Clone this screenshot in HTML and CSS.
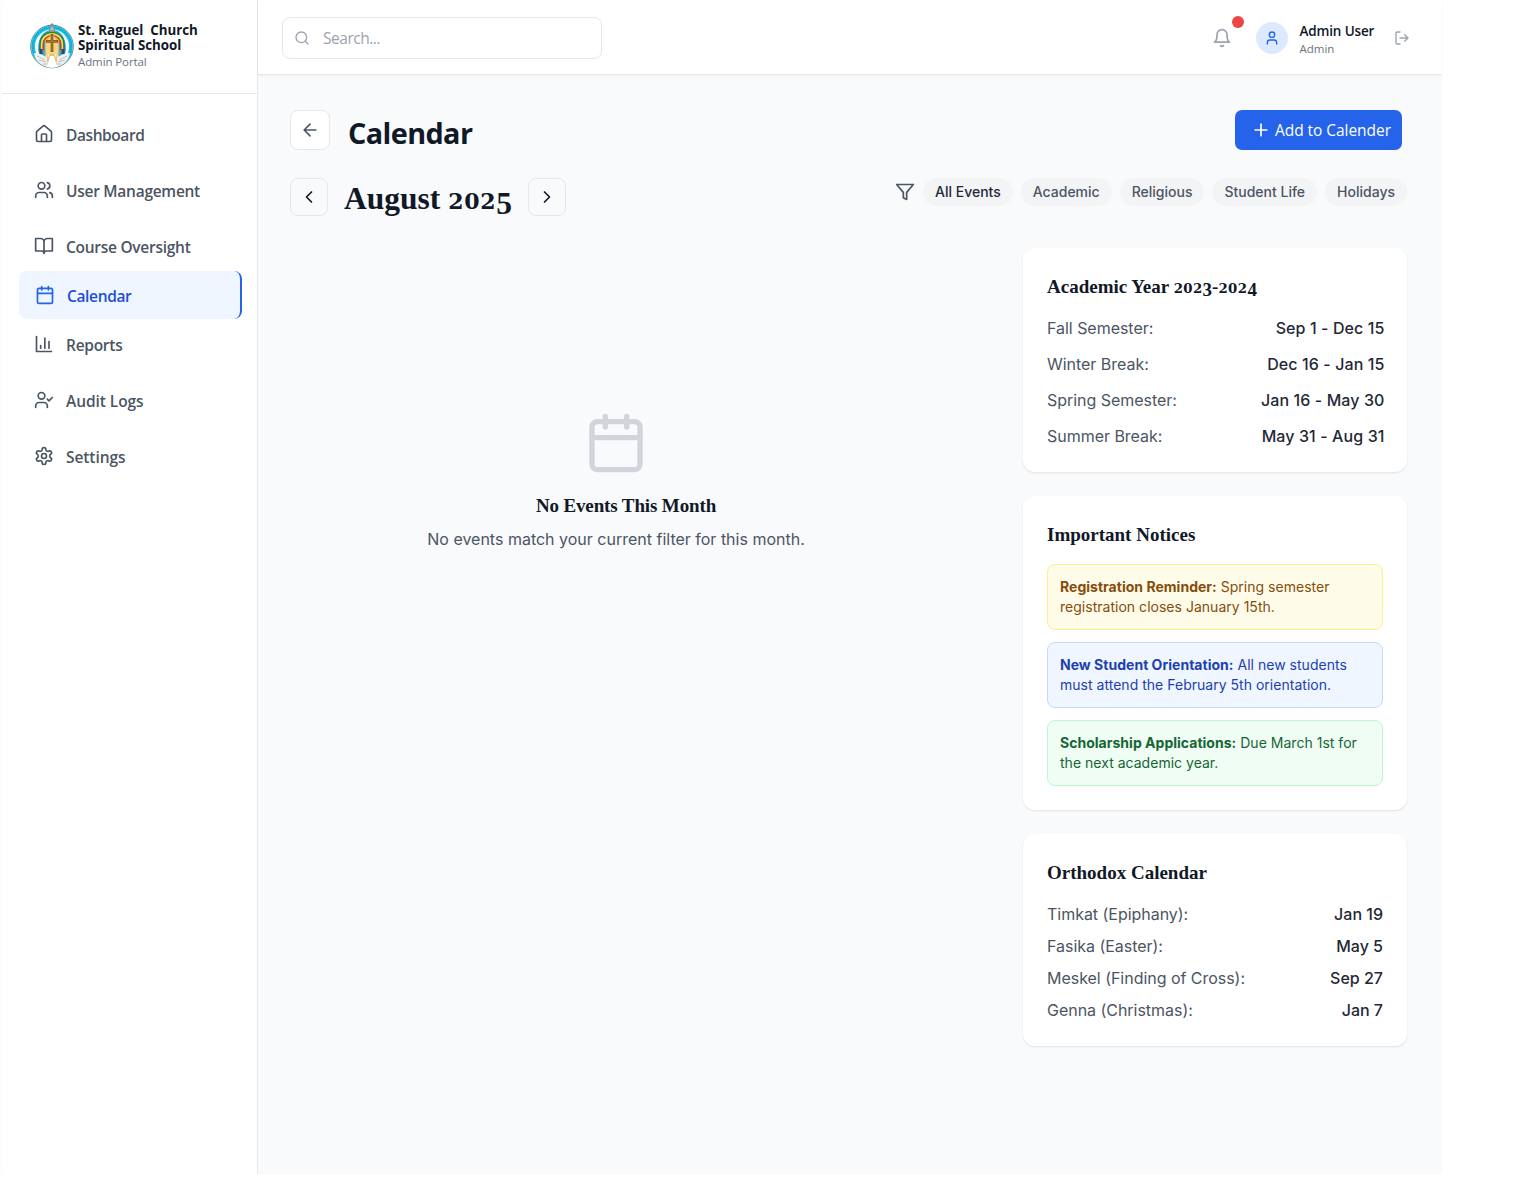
FILE: index.html
```html
<!DOCTYPE html>
<html lang="en">
<head>
<meta charset="utf-8">
<title>Calendar - Admin Portal</title>
<link rel="stylesheet" href="styles.css">
</head>
<body>
<div class="app">
  <aside class="sidebar">
    <div class="brand">
      <svg class="logo" viewBox="0 0 44 46">
        <circle cx="22" cy="23.500" r="21.300" fill="#fff" stroke="#3d5a66" stroke-width=".8"/>
        <circle cx="22" cy="23.500" r="19" fill="#fff" stroke="#18c3ea" stroke-width="3.800"/>
        <circle cx="22" cy="23.500" r="19.200" fill="none" stroke="#14566b" stroke-width="1.400" stroke-dasharray="1 1.400" opacity=".5"/>
        <path d="M8 27C8 13 14 7 22 7s14 6 14 20l-2 8H10z" fill="#35a9e8"/>
        <path d="M15 36V15l7-8 7 8v21z" fill="#e6b64c"/>
        <path d="M10 27V22C10 14 15 9.500 22 9.500S34 14 34 22v5" fill="none" stroke="#22863c" stroke-width="1.600"/>
        <path d="M11.700 27V22C11.700 15 16 11.200 22 11.200S32.300 15 32.300 22v5" fill="none" stroke="#f5df38" stroke-width="1.700"/>
        <path d="M13.300 27V22C13.300 16 17 12.800 22 12.800S30.700 16 30.700 22v5" fill="none" stroke="#d93732" stroke-width="1.400"/>
        <path d="M16 34V19l6-9 6 9v15z" fill="#f4d883"/>
        <path d="M22 11v18M16 18.300h12" stroke="#865018" stroke-width="2.700"/>
        <path d="M22 12v16M17 18.300h10" stroke="#b98035" stroke-width="1"/>
        <path d="M9.500 26h3v5h-3zM31.500 26h3v5h-3z" fill="#3a4656"/>
        <path d="M4 30c5 0 9 2 12 4l2-3 4 3 4-3 2 3c3-2 7-4 12-4-1 8-8 14-18 15C12 44 5 38 4 30z" fill="#f4f2ee"/>
        <path d="M7 33l8 4M9 37l7 2M13 41l5 0M37 33l-8 4M35 37l-7 2M31 41l-5 0" stroke="#a8aeb5" stroke-width=".8"/>
        <path d="M17 30l1 5 2-4h4l2 4 1-5v9l-5 4-5-4z" fill="#e3c16f"/>
        <path d="M20 33h4l3 11H17z" fill="#fff"/>
        <path d="M22 0v3M20.500 1.500h3" stroke="#7f8a92" stroke-width="1"/>
        <path d="M19.500 8c0-3 1-5 2.500-5s2.500 2 2.500 5z" fill="#b5b8ab" stroke="#6f7d85" stroke-width=".6"/>
      </svg>
      <div class="brand-text">
        <div class="brand-name">St. Raguel&nbsp; Church<br>Spiritual School</div>
        <div class="brand-sub">Admin Portal</div>
      </div>
    </div>
    <nav class="nav">
      <a class="nav-item"><svg class="icon" viewBox="0 0 24 24"><path d="M15 21v-8a1 1 0 0 0-1-1h-4a1 1 0 0 0-1 1v8"/><path d="M3 10a2 2 0 0 1 .709-1.528l7-6a2 2 0 0 1 2.582 0l7 6A2 2 0 0 1 21 10v9a2 2 0 0 1-2 2H5a2 2 0 0 1-2-2z"/></svg><span class="t-dashboard">Dashboard</span></a>
      <a class="nav-item"><svg class="icon" viewBox="0 0 24 24"><path d="M16 21v-2a4 4 0 0 0-4-4H6a4 4 0 0 0-4 4v2"/><circle cx="9" cy="7" r="4"/><path d="M22 21v-2a4 4 0 0 0-3-3.870M16 3.130a4 4 0 0 1 0 7.750"/></svg><span>User Management</span></a>
      <a class="nav-item"><svg class="icon" viewBox="0 0 24 24"><path d="M2 3h6a4 4 0 0 1 4 4v14a3 3 0 0 0-3-3H2zM22 3h-6a4 4 0 0 0-4 4v14a3 3 0 0 1 3-3h7z"/></svg><span>Course Oversight</span></a>
      <a class="nav-item active"><svg class="icon" viewBox="0 0 24 24"><path d="M8 2v4M16 2v4M3 10h18"/><rect x="3" y="4" width="18" height="18" rx="2"/></svg><span>Calendar</span></a>
      <a class="nav-item"><svg class="icon" viewBox="0 0 24 24"><path d="M3 3v18h18M18 17V9M13 17V5M8 17v-3"/></svg><span>Reports</span></a>
      <a class="nav-item"><svg class="icon" viewBox="0 0 24 24"><path d="M16 21v-2a4 4 0 0 0-4-4H6a4 4 0 0 0-4 4v2"/><circle cx="9" cy="7" r="4"/><path d="m16 11 2 2 4-4"/></svg><span class="t-wide">Audit Logs</span></a>
      <a class="nav-item"><svg class="icon" viewBox="0 0 24 24"><path d="M12.220 2h-.44a2 2 0 0 0-2 2v.18a2 2 0 0 1-1 1.730l-.43.25a2 2 0 0 1-2 0l-.15-.08a2 2 0 0 0-2.730.73l-.22.38a2 2 0 0 0 .73 2.730l.15.1a2 2 0 0 1 1 1.720v.51a2 2 0 0 1-1 1.740l-.15.09a2 2 0 0 0-.73 2.730l.22.38a2 2 0 0 0 2.730.73l.15-.08a2 2 0 0 1 2 0l.43.25a2 2 0 0 1 1 1.730V20a2 2 0 0 0 2 2h.44a2 2 0 0 0 2-2v-.18a2 2 0 0 1 1-1.730l.43-.25a2 2 0 0 1 2 0l.15.08a2 2 0 0 0 2.730-.73l.22-.39a2 2 0 0 0-.73-2.730l-.15-.08a2 2 0 0 1-1-1.740v-.5a2 2 0 0 1 1-1.740l.15-.09a2 2 0 0 0 .73-2.730l-.22-.38a2 2 0 0 0-2.730-.73l-.15.08a2 2 0 0 1-2 0l-.43-.25a2 2 0 0 1-1-1.730V4a2 2 0 0 0-2-2z"/><circle cx="12" cy="12" r="3"/></svg><span class="t-wide">Settings</span></a>
    </nav>
  </aside>

  <div class="main">
    <header class="topbar">
      <div class="search"><svg class="icon" viewBox="0 0 24 24"><circle cx="11" cy="11" r="8"/><path d="m21 21-4.300-4.300"/></svg><span>Search...</span></div>
      <div class="account">
        <div class="bell"><svg class="icon" viewBox="0 0 24 24"><path d="M6 8a6 6 0 0 1 12 0c0 7 3 9 3 9H3s3-2 3-9M10.300 21a1.940 1.940 0 0 0 3.400 0"/></svg><i class="dot"></i></div>
        <div class="avatar"><svg class="icon" viewBox="0 0 24 24"><path d="M19 21v-2a4 4 0 0 0-4-4H9a4 4 0 0 0-4 4v2"/><circle cx="12" cy="7" r="4"/></svg></div>
        <div class="who"><div class="who-name">Admin User</div><div class="who-role">Admin</div></div>
        <svg class="icon logout" viewBox="0 0 24 24"><path d="M9 21H5a2 2 0 0 1-2-2V5a2 2 0 0 1 2-2h4M16 17l5-5-5-5M21 12H9"/></svg>
      </div>
    </header>

    <main class="content">
      <div class="title-row">
        <a class="back"><svg class="icon" viewBox="0 0 24 24"><path d="m12 19-7-7 7-7M19 12H5"/></svg></a>
        <h1>Calendar</h1>
        <a class="add"><svg class="icon" viewBox="0 0 24 24"><path d="M5 12h14M12 5v14"/></svg><span>Add to Calender</span></a>
      </div>
      <div class="month-row">
        <a class="step"><svg class="icon" viewBox="0 0 24 24"><path d="m15 18-6-6 6-6"/></svg></a>
        <h2>August <span class="num-x">202</span><span class="num-d">5</span></h2>
        <a class="step"><svg class="icon" viewBox="0 0 24 24"><path d="m9 18 6-6-6-6"/></svg></a>
        <div class="filters">
          <svg class="icon" viewBox="0 0 24 24"><path d="M22 3H2l8 9.460V19l4 2v-8.540z"/></svg>
          <a class="pill on">All Events</a><a class="pill">Academic</a><a class="pill">Religious</a><a class="pill">Student Life</a><a class="pill">Holidays</a>
        </div>
      </div>
      <div class="columns">
        <section class="empty">
          <svg class="icon" viewBox="0 0 24 24"><path d="M8 2v4M16 2v4M3 10h18"/><rect x="3" y="4" width="18" height="18" rx="2"/></svg>
          <h3>No Events This Month</h3>
          <p>No events match your current filter for this month.</p>
        </section>
        <div class="side">
          <section class="card">
            <h3>Academic Year <span class="num-x">202</span><span class="num-d">3</span>-<span class="num-x">202</span><span class="num-d">4</span></h3>
            <dl class="rows roomy">
              <div><dt>Fall Semester:</dt><dd>Sep 1 - Dec 15</dd></div>
              <div><dt>Winter Break:</dt><dd>Dec 16 - Jan 15</dd></div>
              <div><dt>Spring Semester:</dt><dd>Jan 16 - May 30</dd></div>
              <div><dt>Summer Break:</dt><dd>May 31 - Aug 31</dd></div>
            </dl>
          </section>
          <section class="card">
            <h3>Important Notices</h3>
            <div class="notices">
              <p class="notice yellow"><strong>Registration Reminder:</strong> Spring semester<br>registration closes January 15th.</p>
              <p class="notice blue"><strong>New Student Orientation:</strong> All new students<br>must attend the February 5th orientation.</p>
              <p class="notice green"><strong>Scholarship Applications:</strong> Due March 1st for<br>the next academic year.</p>
            </div>
          </section>
          <section class="card">
            <h3>Orthodox Calendar</h3>
            <dl class="rows">
              <div><dt>Timkat (Epiphany):</dt><dd>Jan 19</dd></div>
              <div><dt>Fasika (Easter):</dt><dd>May 5</dd></div>
              <div><dt>Meskel (Finding of Cross):</dt><dd>Sep 27</dd></div>
              <div><dt>Genna (Christmas):</dt><dd>Jan 7</dd></div>
            </dl>
          </section>
        </div>
      </div>
    </main>
  </div>
</div>
</body>
</html>
```
FILE: styles.css
```css
* { box-sizing: border-box; }
body { margin: 0; background: #fff; font-family: "Open Sans", sans-serif; color: #111827; }
h1, h2, h3, p, dl, dd { margin: 0; }

.icon { width: 20px; height: 20px; flex: none; fill: none; stroke: currentColor; stroke-width: 2; stroke-linecap: round; stroke-linejoin: round; }

.app { display: flex; width: 1440px; height: 1174px; margin-left: 2px; }

/* Sidebar */
.sidebar { width: 256px; flex: none; border-right: 1px solid #e5e7eb; box-shadow: 0 1px 2px rgba(0, 0, 0, .06); }
.brand { display: flex; height: 94px; padding: 23px 0 0 28px; border-bottom: 1px solid #e5e7eb; }
.logo { width: 44px; height: 46px; flex: none; }
.brand-text { padding-left: 4px; }
.brand-name { font-size: 13.300px; line-height: 15px; font-weight: 700; white-space: nowrap; }
.brand-sub { margin-top: 1px; font-size: 11.500px; line-height: 16px; letter-spacing: -.1px; color: #6b7280; }
.nav { display: flex; flex-direction: column; gap: 8px; padding: 17px 15px 0 16px; }
.nav-item { display: flex; align-items: center; gap: 12px; height: 48px; padding-left: 16px; font-size: 15.500px; font-weight: 550; letter-spacing: -.27px; color: #4b5563; white-space: nowrap; }
.nav-item .icon { stroke-width: 2; margin-top: -2px; }
.t-dashboard { letter-spacing: -.42px; }
.t-wide { letter-spacing: -.07px; }
.nav-item.active { margin: -8px 0 -6px 1px; background: #eff6ff; border-right: 2px solid #2563eb; border-radius: 8px; font-weight: 600; letter-spacing: -.35px; color: #1d4ed8; }
.nav-item.active .icon { margin-top: 0; stroke: #2563eb; }
.nav-item.active span { padding-top: 2px; }

/* Top bar */
.main { flex: 1; min-width: 0; display: flex; flex-direction: column; background: #f9fafb; }
.topbar { display: flex; justify-content: space-between; height: 75px; padding: 17px 32px 0 24px; background: #fff; border-bottom: 1px solid #e5e7eb; box-shadow: 0 1px 2px rgba(0, 0, 0, .05); }
.search { display: flex; align-items: center; gap: 13px; width: 320px; height: 42px; padding-left: 11px; border: 1px solid #e5e7eb; border-radius: 8px; font-size: 15.500px; letter-spacing: -.48px; color: #9ca3af; }
.search .icon { width: 16px; height: 16px; }
.account { display: flex; align-items: center; height: 42px; }
.bell { position: relative; display: flex; color: #9ca3af; }
.dot { position: absolute; left: 20px; top: -12px; width: 12px; height: 12px; border-radius: 50%; background: #ef4444; }
.avatar { display: grid; place-items: center; width: 32px; height: 32px; margin-left: 24px; border-radius: 50%; background: #dbeafe; color: #2563eb; }
.avatar .icon { width: 16px; height: 16px; }
.who { margin-left: 12px; width: 94.500px; white-space: nowrap; }
.who-name { margin-top: 3px; font-size: 13.500px; line-height: 18px; font-weight: 600; letter-spacing: -.15px; }
.who-role { font-size: 11.500px; line-height: 17px; color: #6b7280; }
.logout { width: 16px; height: 16px; color: #9ca3af; }

/* Page heading */
.content { padding: 35px 35px 0 32px; }
.title-row { display: flex; align-items: center; height: 40px; padding-right: 5px; }
.back { display: grid; place-items: center; width: 40px; height: 40px; background: #fff; border: 1px solid #e5e7eb; border-radius: 8px; color: #4b5563; }
h1 { margin: 5px 0 0 18px; font-size: 28.800px; line-height: 36px; font-weight: 700; letter-spacing: -.6px; }
.add { display: flex; align-items: center; gap: 4px; width: 167px; height: 40px; margin-left: auto; padding-left: 16px; border-radius: 7px; background: #2563eb; color: #fff; font-size: 15.500px; letter-spacing: -.05px; white-space: nowrap; }

/* Month switcher and filters */
.month-row { display: flex; height: 38px; margin-top: 28px; }
.step { display: grid; place-items: center; width: 38px; height: 38px; border: 1px solid #e5e7eb; border-radius: 8px; }
h2, h3 { font-family: "Liberation Serif", serif; font-weight: 700; white-space: nowrap; }
h2 { width: 167.500px; margin: 2px 16px 0; font-size: 31.500px; line-height: 38px; }
.num-x { font-family: "DejaVu Serif", serif; font-size: .7em; letter-spacing: .03em; line-height: 0; }
.num-d { line-height: 0; vertical-align: -.17em; }
.filters { display: flex; align-items: center; gap: 8px; height: 28px; margin-left: auto; font-family: Inter, sans-serif; font-size: 14px; font-weight: 500; color: #4b5563; }
.pill { height: 28px; padding: 0 12px; border-radius: 14px; background: #f3f4f6; line-height: 28px; white-space: nowrap; }
.pill.on { color: #1f2937; }

/* Body columns */
.columns { display: flex; justify-content: space-between; margin-top: 32px; font-family: Inter, sans-serif; }
.empty { display: flex; flex-direction: column; align-items: center; width: 652px; padding-top: 163px; }
.empty .icon { width: 64px; height: 64px; color: #d1d5db; }
.empty h3 { margin: 17px 0 0 20px; font-size: 19px; line-height: 28px; letter-spacing: -.13px; }
.empty p { margin-top: 7px; font-size: 16px; line-height: 24px; color: #4b5563; }
.side { display: flex; flex-direction: column; gap: 24px; width: 384px; }
.card { padding: 24px; border-radius: 12px; background: #fff; box-shadow: 0 1px 2px rgba(0, 0, 0, .1); }
.card h3 { margin-bottom: 15px; padding-top: 1px; font-size: 19px; line-height: 28px; }
.rows { display: flex; flex-direction: column; gap: 8px; font-size: 16px; line-height: 24px; }
.rows.roomy { gap: 12px; }
.rows div { display: flex; justify-content: space-between; }
.rows dt { color: #4b5563; letter-spacing: -.03px; }
.rows dd { font-weight: 500; color: #1f2937; }
.roomy dd { margin-right: -1.500px; letter-spacing: .1px; }
.notices { display: flex; flex-direction: column; gap: 12px; }
.notice { padding: 12px; border: 1px solid; border-radius: 8px; font-size: 14px; line-height: 20px; letter-spacing: .02px; white-space: nowrap; }
.notice.yellow { background: #fefce8; border-color: #fef08a; color: #854d0e; }
.notice.blue { background: #eff6ff; border-color: #bfdbfe; color: #1e40af; }
.notice.green { background: #f0fdf4; border-color: #bbf7d0; color: #166534; }
```
